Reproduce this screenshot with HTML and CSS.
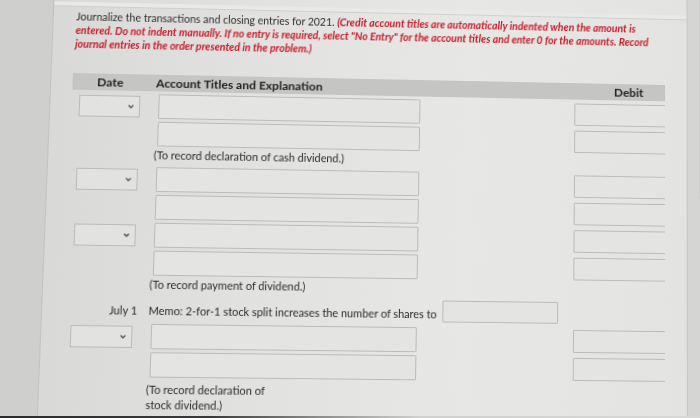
FILE: index.html
```html
<!DOCTYPE html>
<html lang="en">
<head>
<meta charset="utf-8">
<title>Journal entries</title>
<link rel="stylesheet" href="styles.css">
</head>
<body>
<div class="screen">
  <div class="gutter"></div>
  <main class="panel">
    <div class="topstrip"></div>
    <p class="instructions">Journalize the transactions and closing entries for 2021. <em class="note">(Credit account titles are automatically indented when the amount is<br>entered. Do not indent manually. If no entry is required, select "No Entry" for the account titles and enter 0 for the amounts. Record<br>journal entries in the order presented in the problem.)</em></p>

    <div class="journal">
      <div class="jhead">
        <div class="c-date"><span class="date-label">Date</span></div>
        <div class="c-acct">Account Titles and Explanation</div>
        <div class="c-debit">Debit</div>
      </div>

      <div class="jrow">
        <div class="c-date"><div class="sel"><svg width="6" height="4" viewBox="0 0 6 4"><path d="M0.6 0.6 L3 3 L5.4 0.6" fill="none" stroke="#4a4a4a" stroke-width="1.3"/></svg></div></div>
        <div class="c-acct"><div class="inp acct"></div></div>
        <div class="c-debit"><div class="inp amt"></div></div>
      </div>
      <div class="jrow">
        <div class="c-date"></div>
        <div class="c-acct"><div class="inp acct"></div></div>
        <div class="c-debit"><div class="inp amt"></div></div>
      </div>
      <div class="expl">(To record declaration of cash dividend.)</div>

      <div class="jrow">
        <div class="c-date"><div class="sel"><svg width="6" height="4" viewBox="0 0 6 4"><path d="M0.6 0.6 L3 3 L5.4 0.6" fill="none" stroke="#4a4a4a" stroke-width="1.3"/></svg></div></div>
        <div class="c-acct"><div class="inp acct"></div></div>
        <div class="c-debit"><div class="inp amt"></div></div>
      </div>
      <div class="jrow">
        <div class="c-date"></div>
        <div class="c-acct"><div class="inp acct"></div></div>
        <div class="c-debit"><div class="inp amt"></div></div>
      </div>
      <div class="jrow">
        <div class="c-date"><div class="sel"><svg width="6" height="4" viewBox="0 0 6 4"><path d="M0.6 0.6 L3 3 L5.4 0.6" fill="none" stroke="#4a4a4a" stroke-width="1.3"/></svg></div></div>
        <div class="c-acct"><div class="inp acct"></div></div>
        <div class="c-debit"><div class="inp amt"></div></div>
      </div>
      <div class="jrow">
        <div class="c-date"></div>
        <div class="c-acct"><div class="inp acct"></div></div>
        <div class="c-debit"><div class="inp amt"></div></div>
      </div>
      <div class="expl">(To record payment of dividend.)</div>

      <div class="memo">
        <div class="c-date memo-date">July 1</div>
        <div class="memo-text">Memo: 2-for-1 stock split increases the number of shares to</div>
        <div class="inp memo-inp"></div>
      </div>

      <div class="jrow">
        <div class="c-date"><div class="sel"><svg width="6" height="4" viewBox="0 0 6 4"><path d="M0.6 0.6 L3 3 L5.4 0.6" fill="none" stroke="#4a4a4a" stroke-width="1.3"/></svg></div></div>
        <div class="c-acct"><div class="inp acct"></div></div>
        <div class="c-debit"><div class="inp amt"></div></div>
      </div>
      <div class="jrow">
        <div class="c-date"></div>
        <div class="c-acct"><div class="inp acct"></div></div>
        <div class="c-debit"><div class="inp amt"></div></div>
      </div>
      <div class="expl expl-multi">(To record declaration of<br>stock dividend.)</div>
    </div>
  </main>
  <div class="rightgut"></div>
</div>
<div class="bezel"></div>
</body>
</html>
```

FILE: styles.css
```css
html, body {
  margin: 0;
  padding: 0;
  overflow: hidden;
}
body {
  width: 700px;
  height: 418px;
  background: #cfcfcd;
  font-family: Lato, "Open Sans", sans-serif;
  color: #2a2a2a;
}
.screen {
  display: flex;
  width: 720px;
  height: 436px;
  margin: -20px 0 0 -20px;
  overflow: hidden;
  transform-origin: 93px 93px;
  transform: matrix3d(1.019853, 0.020673, 0, 0.000033535, -0.037793, 0.97966, 0, -0.000063487, 0, 0, 1, 0, 0, 0, 0, 1);
}
.bezel {
  position: relative;
  z-index: 1;
  height: 2px;
  background: linear-gradient(90deg, #2c2c2c 0%, #3a3a3a 30%, #8a8a88 45%, #d0d0ce 60%, #d8d8d6 100%);
}
.gutter {
  width: 71px;
  flex: none;
  background: #cfcfcd;
}
.panel {
  width: 637px;
  flex: none;
  padding-top: 20px;
  background: linear-gradient(90deg, #d9d9d7 0%, #e1e1df 30%, #e7e7e5 65%, #e3e3e1 100%);
  border-left: 1px solid #c2c2c0;
  border-right: 1px solid #c6c6c4;
  box-sizing: border-box;
}
.rightgut {
  flex: 1;
  background: #d5d5d3;
}
.topstrip {
  height: 4px;
  background: #e9e9e7;
  border-bottom: 1px solid #cfcfcd;
}
.instructions {
  margin: 3px 0 0 22px;
  font-size: 10.5px;
  line-height: 14px;
  white-space: nowrap;
  color: #2e2e2e;
}
.note {
  color: #c81d2c;
  font-weight: 700;
  font-style: italic;
}
.journal {
  margin: 23px 0 0 21px;
  width: 592px;
  overflow: hidden;
  font-size: 10.8px;
}
.jhead {
  display: flex;
  align-items: center;
  height: 17px;
  background: #c5c5c3;
  font-weight: 700;
  font-size: 12px;
  color: #1f1f1f;
}
.c-date {
  width: 82px;
  flex: none;
}
.c-acct {
  width: 418px;
  flex: none;
}
.c-debit {
  width: 110px;
  flex: none;
}
.jhead .c-debit {
  text-align: center;
}
.date-label {
  display: block;
  width: 60px;
  margin-left: 7px;
  text-align: center;
}
.jrow {
  display: flex;
  align-items: center;
  height: 25px;
  margin-top: 3px;
}
.inp {
  box-sizing: border-box;
  border: 1px solid #bbbbb9;
  background: #e4e4e2;
  border-radius: 1px;
}
.acct {
  width: 260px;
  height: 25px;
  margin-left: 3px;
}
.amt {
  width: 108px;
  height: 23px;
}
.sel {
  box-sizing: border-box;
  width: 60px;
  height: 22px;
  margin-left: 7px;
  border: 1px solid #bbbbb9;
  background: #e2e2e0;
  display: flex;
  align-items: center;
  justify-content: flex-end;
  padding-right: 5px;
}
.expl {
  margin-left: 82px;
  line-height: 18px;
  height: 18px;
  color: #2b2b2b;
}
.expl-multi {
  height: auto;
  line-height: 14.5px;
  margin-top: 5px;
}
.memo {
  display: flex;
  align-items: flex-end;
  height: 22px;
  margin-top: 3px;
  margin-bottom: 5px;
}
.memo-date {
  box-sizing: border-box;
  text-align: right;
  padding-right: 11px;
  line-height: 16px;
}
.memo-text {
  line-height: 16px;
  white-space: nowrap;
}
.memo-inp {
  width: 115px;
  height: 22px;
  margin-left: 6px;
}
```
